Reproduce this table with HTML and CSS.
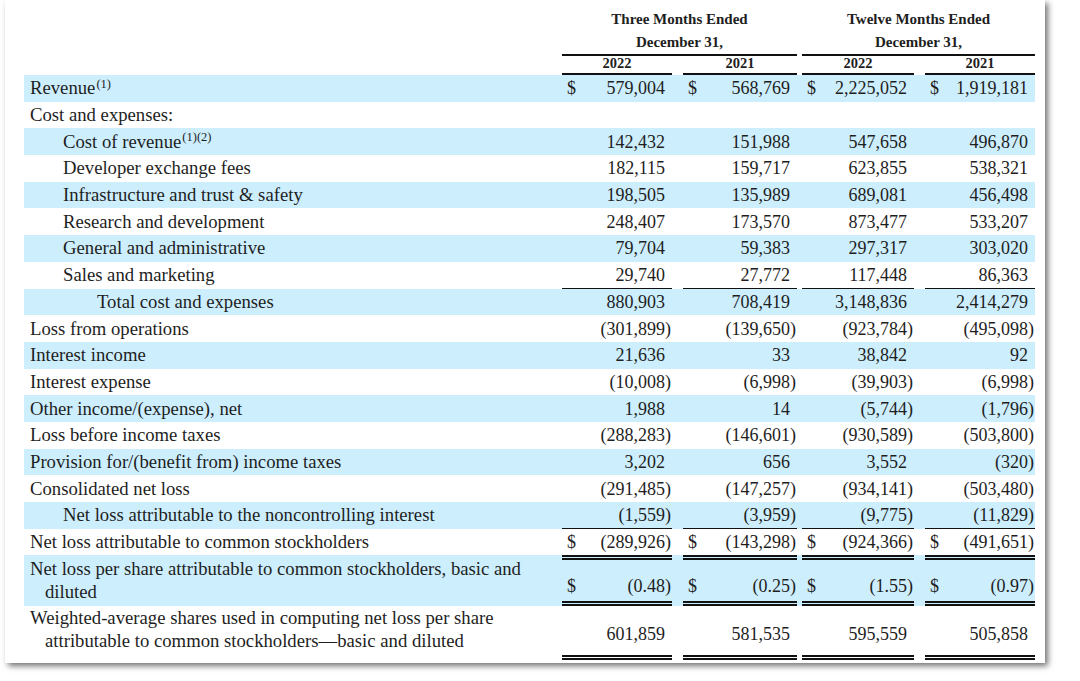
FILE: index.html
```html
<!DOCTYPE html>
<html lang="en">
<head>
<meta charset="utf-8">
<title>Consolidated Statements of Operations</title>
<link rel="stylesheet" href="styles.css">
</head>
<body>
<div class="card">
  <div class="stmt">
    <div class="hrow hgroup">
      <div class="lbl"></div>
      <div class="grp g1">Three Months Ended<br>December 31,</div>
      <div class="grp g2">Twelve Months Ended<br>December 31,</div>
    </div>
    <div class="hrow hyear">
      <div class="lbl"></div>
      <div class="yr c1">2022</div>
      <div class="yr c2">2021</div>
      <div class="yr c3">2022</div>
      <div class="yr c4">2021</div>
    </div>

    <div class="row band">
      <div class="lbl">Revenue<sup>(1)</sup></div>
      <div class="v c1"><span class="d">$</span><span class="n p">579,004</span></div>
      <div class="v c2"><span class="d">$</span><span class="n p">568,769</span></div>
      <div class="v c3"><span class="d">$</span><span class="n p">2,225,052</span></div>
      <div class="v c4"><span class="d">$</span><span class="n p">1,919,181</span></div>
    </div>
    <div class="row">
      <div class="lbl">Cost and expenses:</div>
    </div>
    <div class="row band">
      <div class="lbl i1">Cost of revenue<sup>(1)(2)</sup></div>
      <div class="v c1"><span class="n p">142,432</span></div>
      <div class="v c2"><span class="n p">151,988</span></div>
      <div class="v c3"><span class="n p">547,658</span></div>
      <div class="v c4"><span class="n p">496,870</span></div>
    </div>
    <div class="row">
      <div class="lbl i1">Developer exchange fees</div>
      <div class="v c1"><span class="n p">182,115</span></div>
      <div class="v c2"><span class="n p">159,717</span></div>
      <div class="v c3"><span class="n p">623,855</span></div>
      <div class="v c4"><span class="n p">538,321</span></div>
    </div>
    <div class="row band">
      <div class="lbl i1">Infrastructure and trust &amp; safety</div>
      <div class="v c1"><span class="n p">198,505</span></div>
      <div class="v c2"><span class="n p">135,989</span></div>
      <div class="v c3"><span class="n p">689,081</span></div>
      <div class="v c4"><span class="n p">456,498</span></div>
    </div>
    <div class="row">
      <div class="lbl i1">Research and development</div>
      <div class="v c1"><span class="n p">248,407</span></div>
      <div class="v c2"><span class="n p">173,570</span></div>
      <div class="v c3"><span class="n p">873,477</span></div>
      <div class="v c4"><span class="n p">533,207</span></div>
    </div>
    <div class="row band">
      <div class="lbl i1">General and administrative</div>
      <div class="v c1"><span class="n p">79,704</span></div>
      <div class="v c2"><span class="n p">59,383</span></div>
      <div class="v c3"><span class="n p">297,317</span></div>
      <div class="v c4"><span class="n p">303,020</span></div>
    </div>
    <div class="row ul">
      <div class="lbl i1">Sales and marketing</div>
      <div class="v c1"><span class="n p">29,740</span></div>
      <div class="v c2"><span class="n p">27,772</span></div>
      <div class="v c3"><span class="n p">117,448</span></div>
      <div class="v c4"><span class="n p">86,363</span></div>
    </div>
    <div class="row band">
      <div class="lbl i2">Total cost and expenses</div>
      <div class="v c1"><span class="n p">880,903</span></div>
      <div class="v c2"><span class="n p">708,419</span></div>
      <div class="v c3"><span class="n p">3,148,836</span></div>
      <div class="v c4"><span class="n p">2,414,279</span></div>
    </div>
    <div class="row">
      <div class="lbl">Loss from operations</div>
      <div class="v c1"><span class="n">(301,899)</span></div>
      <div class="v c2"><span class="n">(139,650)</span></div>
      <div class="v c3"><span class="n">(923,784)</span></div>
      <div class="v c4"><span class="n">(495,098)</span></div>
    </div>
    <div class="row band">
      <div class="lbl">Interest income</div>
      <div class="v c1"><span class="n p">21,636</span></div>
      <div class="v c2"><span class="n p">33</span></div>
      <div class="v c3"><span class="n p">38,842</span></div>
      <div class="v c4"><span class="n p">92</span></div>
    </div>
    <div class="row">
      <div class="lbl">Interest expense</div>
      <div class="v c1"><span class="n">(10,008)</span></div>
      <div class="v c2"><span class="n">(6,998)</span></div>
      <div class="v c3"><span class="n">(39,903)</span></div>
      <div class="v c4"><span class="n">(6,998)</span></div>
    </div>
    <div class="row band">
      <div class="lbl">Other income/(expense), net</div>
      <div class="v c1"><span class="n p">1,988</span></div>
      <div class="v c2"><span class="n p">14</span></div>
      <div class="v c3"><span class="n">(5,744)</span></div>
      <div class="v c4"><span class="n">(1,796)</span></div>
    </div>
    <div class="row">
      <div class="lbl">Loss before income taxes</div>
      <div class="v c1"><span class="n">(288,283)</span></div>
      <div class="v c2"><span class="n">(146,601)</span></div>
      <div class="v c3"><span class="n">(930,589)</span></div>
      <div class="v c4"><span class="n">(503,800)</span></div>
    </div>
    <div class="row band">
      <div class="lbl">Provision for/(benefit from) income taxes</div>
      <div class="v c1"><span class="n p">3,202</span></div>
      <div class="v c2"><span class="n p">656</span></div>
      <div class="v c3"><span class="n p">3,552</span></div>
      <div class="v c4"><span class="n">(320)</span></div>
    </div>
    <div class="row">
      <div class="lbl">Consolidated net loss</div>
      <div class="v c1"><span class="n">(291,485)</span></div>
      <div class="v c2"><span class="n">(147,257)</span></div>
      <div class="v c3"><span class="n">(934,141)</span></div>
      <div class="v c4"><span class="n">(503,480)</span></div>
    </div>
    <div class="row band ul">
      <div class="lbl i1">Net loss attributable to the noncontrolling interest</div>
      <div class="v c1"><span class="n">(1,559)</span></div>
      <div class="v c2"><span class="n">(3,959)</span></div>
      <div class="v c3"><span class="n">(9,775)</span></div>
      <div class="v c4"><span class="n">(11,829)</span></div>
    </div>
    <div class="row">
      <div class="lbl">Net loss attributable to common stockholders</div>
      <div class="v c1"><span class="d">$</span><span class="n">(289,926)</span></div>
      <div class="v c2"><span class="d">$</span><span class="n">(143,298)</span></div>
      <div class="v c3"><span class="d">$</span><span class="n">(924,366)</span></div>
      <div class="v c4"><span class="d">$</span><span class="n">(491,651)</span></div>
    </div>
    <div class="row band tall pershare">
      <div class="lbl wrap">Net loss per share attributable to common stockholders, basic and diluted</div>
      <div class="v c1"><span class="d">$</span><span class="n">(0.48)</span></div>
      <div class="v c2"><span class="d">$</span><span class="n">(0.25)</span></div>
      <div class="v c3"><span class="d">$</span><span class="n">(1.55)</span></div>
      <div class="v c4"><span class="d">$</span><span class="n">(0.97)</span></div>
    </div>
    <div class="row tall shares">
      <div class="lbl wrap">Weighted-average shares used in computing net loss per share attributable to common stockholders—basic and diluted</div>
      <div class="v c1"><span class="n p">601,859</span></div>
      <div class="v c2"><span class="n p">581,535</span></div>
      <div class="v c3"><span class="n p">595,559</span></div>
      <div class="v c4"><span class="n p">505,858</span></div>
    </div>
  </div>
</div>
</body>
</html>
```

FILE: styles.css
```css
* { box-sizing: border-box; }

html, body {
  margin: 0;
  padding: 0;
  background: #ffffff;
}

body {
  font-family: "Liberation Serif", "Times New Roman", serif;
  color: #1e1e1e;
  width: 1080px;
  height: 681px;
  overflow: hidden;
}

.card {
  margin-left: 5px;
  width: 1040px;
  height: 663px;
  background: #ffffff;
  box-shadow: 3px 3px 6px rgba(0, 0, 0, 0.55);
  padding-left: 19px;
}

.stmt {
  width: 1011px;
}

.hrow,
.row {
  display: grid;
  grid-template-columns: 538px 110px 125px 117px 121px;
}

/* header */
.hgroup {
  height: 54px;
}
.grp {
  font-weight: bold;
  font-size: 15px;
  line-height: 23px;
  text-align: center;
  padding-top: 8px;
  border-bottom: 2px solid #111;
}
.g1 { grid-column: 2 / 4; }
.g2 { grid-column: 4 / 6; margin-left: 5px; }

.hyear {
  height: 21px;
}
.yr {
  font-weight: bold;
  font-size: 14.5px;
  line-height: 19px;
  text-align: center;
  border-bottom: 2px solid #111;
}

.c2 { margin-left: 11px; }
.c3 { margin-left: 5px; }
.c4 { margin-left: 11px; }

/* body rows */
.row {
  height: 26.7px;
  font-size: 18px;
  line-height: 22px;
}
.band {
  background: #cdeefd;
}

.lbl {
  grid-column: 1;
  padding-left: 6px;
  display: flex;
  align-items: center;
  white-space: nowrap;
  font-size: 18.7px;
}
.i1 { padding-left: 39px; }
.i2 { padding-left: 73px; }

.lbl sup {
  font-size: 12.5px;
  line-height: 13px;
  position: relative;
  top: -4px;
  margin-left: 1px;
}

.v {
  display: flex;
  align-items: center;
  padding: 0 1px 0 5px;
}
.d {
  flex: none;
}
.n {
  margin-left: auto;
  white-space: nowrap;
}
.n.p::after {
  content: ")";
  visibility: hidden;
}

.ul .v {
  border-bottom: 1.5px solid #111;
}

.tall .lbl.wrap {
  white-space: normal;
  display: block;
  line-height: 23px;
  padding-left: 21px;
  text-indent: -15px;
  padding-right: 8px;
}

.pershare {
  height: 51px;
}
.pershare .lbl.wrap {
  padding-top: 2px;
}
.pershare .v {
  border-top: 5px double #111;
  border-bottom: 5px double #111;
  padding-top: 11px;
}

.shares {
  height: 54px;
}
.shares .lbl.wrap {
  padding-top: 0;
}
.shares .v {
  border-bottom: 5px double #111;
  padding-top: 7px;
}
```
